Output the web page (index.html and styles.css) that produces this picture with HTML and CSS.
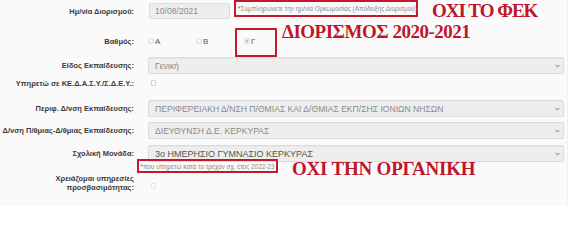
FILE: index.html
```html
<!DOCTYPE html>
<html lang="el">
<head>
<meta charset="utf-8">
<title>Στοιχεία διορισμού</title>
<link rel="stylesheet" href="styles.css">
</head>
<body>
<div class="page">
  <form class="form">
    <div class="row row-date">
      <label class="label">Ημ/νία Διορισμού:</label>
      <div class="field field-inline">
        <div class="input date">10/08/2021</div>
        <span class="hint hint-marked"><span class="star">*</span> Συμπληρώνετε την ημ/νία Ορκωμοσίας (Απόδειξης Διορισμού)</span>
      </div>
    </div>
    <div class="row row-radio">
      <label class="label">Βαθμός:</label>
      <div class="field radios">
        <span class="opt"><span class="radio"></span>Α</span>
        <span class="opt"><span class="radio"></span>Β</span>
        <span class="opt opt-marked"><span class="radio checked"></span>Γ</span>
      </div>
    </div>
    <div class="row row-kind">
      <label class="label">Είδος Εκπαίδευσης:</label>
      <div class="field"><div class="select">Γενική<svg class="chev" viewBox="0 0 6 4"><polyline points="0.8,0.8 3,3 5.2,0.8"/></svg></div></div>
    </div>
    <div class="row row-check">
      <label class="label">Υπηρετώ σε ΚΕ.Δ.Α.Σ.Υ./Σ.Δ.Ε.Υ.:</label>
      <div class="field"><span class="check"></span></div>
    </div>
    <div class="row row-region">
      <label class="label">Περιφ. Δ/νση Εκπαίδευσης:</label>
      <div class="field"><div class="select">ΠΕΡΙΦΕΡΕΙΑΚΗ Δ/ΝΣΗ Π/ΘΜΙΑΣ ΚΑΙ Δ/ΘΜΙΑΣ ΕΚΠ/ΣΗΣ ΙΟΝΙΩΝ ΝΗΣΩΝ<svg class="chev" viewBox="0 0 6 4"><polyline points="0.8,0.8 3,3 5.2,0.8"/></svg></div></div>
    </div>
    <div class="row row-dir">
      <label class="label">Δ/νση Π/θμιας-Δ/θμιας Εκπαίδευσης:</label>
      <div class="field"><div class="select">ΔΙΕΥΘΥΝΣΗ Δ.Ε. ΚΕΡΚΥΡΑΣ<svg class="chev" viewBox="0 0 6 4"><polyline points="0.8,0.8 3,3 5.2,0.8"/></svg></div></div>
    </div>
    <div class="row row-school">
      <label class="label">Σχολική Μονάδα:</label>
      <div class="field"><div class="select select-dark">3ο ΗΜΕΡΗΣΙΟ ΓΥΜΝΑΣΙΟ ΚΕΡΚΥΡΑΣ<svg class="chev" viewBox="0 0 6 4"><polyline points="0.8,0.8 3,3 5.2,0.8"/></svg></div></div>
    </div>
    <div class="row row-hint">
      <span></span>
      <div class="field"><span class="hint hint-school"><span class="star">*</span> που υπηρετώ κατά το τρέχον σχ. έτος 2022-23</span></div>
    </div>
    <div class="row row-access">
      <label class="label label-two">Χρειάζομαι υπηρεσίες<br>προσβασιμότητας:</label>
      <div class="field"><span class="check check-faint"></span></div>
    </div>
  </form>
  <div class="note note-fek">ΟΧΙ ΤΟ ΦΕΚ</div>
  <div class="note note-year">ΔΙΟΡΙΣΜΟΣ 2020-2021</div>
  <div class="note note-org">ΟΧΙ ΤΗΝ ΟΡΓΑΝΙΚΗ</div>
</div>
</body>
</html>
```
FILE: styles.css
```css
* { box-sizing: border-box; }
html, body { margin: 0; padding: 0; background: #ffffff; }
body { font-family: "Liberation Sans", Arial, sans-serif; color: #333; }

.page {
  position: relative;
  width: 582px;
  height: 206px;
  overflow: hidden;
}

.form {
  width: 568px;
  height: 206px;
  padding-top: 3px;
  background: #fafafa;
  border-right: 1px solid #f0f0f0;
}

.row {
  display: grid;
  grid-template-columns: 134px 416px;
  column-gap: 14px;
  align-items: center;
  height: 16px;
}
.row-radio { margin-top: 14px; }
.row-kind { margin-top: 8px; }
.row-check { margin-top: 2px; }
.row-region { margin-top: 9px; }
.row-dir { margin-top: 6px; }
.row-school { margin-top: 7px; }
.row-hint { margin-top: -2px; height: 14px; }
.row-access { height: 22px; align-items: start; }

.label {
  text-align: right;
  font-size: 7.5px;
  font-weight: bold;
  color: #3a3a3a;
  line-height: 9px;
  white-space: nowrap;
}
.label-two { padding-top: 1px; }

.field { position: relative; height: 100%; display: flex; align-items: center; }
.field-inline { gap: 4px; }

.input, .select {
  height: 16px;
  background: #eeeeee;
  border: 1px solid #dcdcdc;
  border-radius: 2px;
  font-size: 8.6px;
  color: #8a8a8a;
  display: flex;
  align-items: center;
  padding-left: 6px;
  white-space: nowrap;
}
.date { width: 81px; margin-left: 1px; padding-left: 5px; }
.select {
  width: 416px;
  height: 17px;
  position: relative;
  font-size: 8.6px;
  box-shadow: inset 0 1px 1px rgba(0,0,0,0.03);
}
.select-dark { color: #555; font-size: 9px; }
.chev {
  position: absolute;
  right: 3px;
  top: 6px;
  width: 5px;
  height: 4px;
  fill: none;
  stroke: #666;
  stroke-width: 1.1;
}

.hint {
  font-size: 6.4px;
  color: #8a8a8a;
  white-space: nowrap;
}
.star { color: #d33; }
.hint-marked {
  align-self: flex-start;
  margin-top: -3px;
  height: 17px;
  width: 184px;
  border: 2px solid #c4192c;
  display: flex;
  align-items: center;
  padding-left: 2px;
}
.hint-school {
  margin-left: -11px;
  width: 141px;
  height: 14px;
  border: 2px solid #c4192c;
  display: flex;
  align-items: center;
  justify-content: center;
  color: #888;
}

.radios { gap: 0; }
.opt {
  width: 48px;
  display: inline-flex;
  align-items: center;
  font-size: 8px;
  color: #555;
}
.opt-marked { position: relative; }
.opt-marked::after {
  content: "";
  position: absolute;
  left: -9px;
  top: -9px;
  width: 38px;
  height: 25px;
  border: 2px solid #c4192c;
}
.radio {
  width: 6px;
  height: 6px;
  border: 1px solid #d4d4d4;
  border-radius: 50%;
  background: #fdfdfd;
  margin-right: 1px;
}
.radio.checked { background: radial-gradient(circle, #bbb 0 1.3px, #fdfdfd 1.6px); }

.check {
  width: 5px;
  height: 6px;
  margin-left: 3px;
  border: 1px solid #d0d0d0;
  background: #fcfcfc;
  border-radius: 1px;
}
.check-faint { margin-top: 3px; border-color: #e6e6e6; }

.note {
  position: absolute;
  font-family: "Liberation Serif", "Times New Roman", serif;
  font-weight: bold;
  font-size: 19px;
  line-height: 19px;
  color: #c0162b;
  white-space: nowrap;
}
.note-fek { left: 432px; top: 1px; letter-spacing: -1px; }
.note-year { left: 282px; top: 22px; letter-spacing: -0.5px; }
.note-org { left: 292px; top: 159px; letter-spacing: -0.2px; }
```
